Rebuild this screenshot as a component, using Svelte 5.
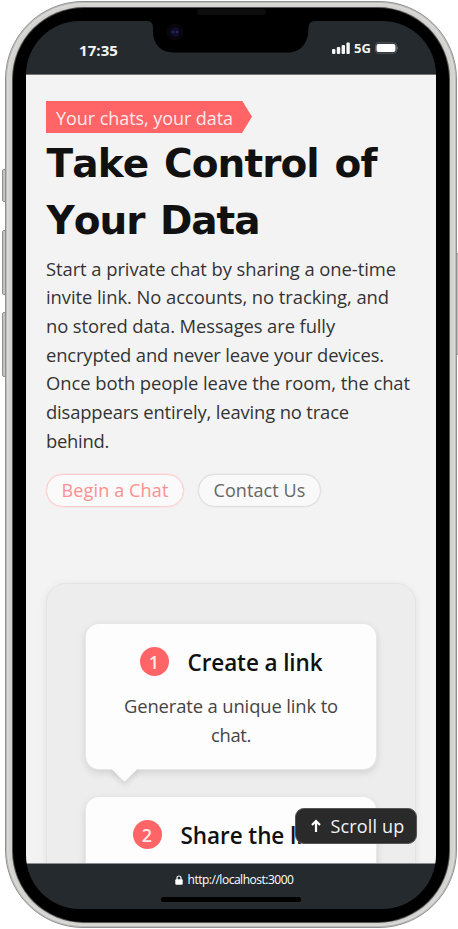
<script>
  const intro = [
    ['Start a private chat by sharing a one-time', 350],
    ['invite link. No accounts, no tracking, and', 343],
    ['no stored data. Messages are fully', 289],
    ['encrypted and never leave your devices.', 338],
    ['Once both people leave the room, the chat', 364],
    ['disappears entirely, leaving no trace', 303],
    ['behind.', 63]
  ];
  const steps = [
    { title: 'Create a link', width: 135, lines: [['Generate a unique link to', 214], ['chat.', 40]] },
    { title: 'Share the link', width: 149, lines: [] }
  ];

  // Tracks a line of text out to a given measure.
  function fit(node, width) {
    node.style.letterSpacing = '0px';
    const natural = node.getBoundingClientRect().width;
    node.style.letterSpacing = (width - natural) / node.textContent.length + 'px';
  }
</script>

<div class="stage">
  <i class="key k1"></i><i class="key k2"></i><i class="key k3"></i><i class="key k4"></i>
  <div class="phone">
    <div class="bezel">
      <div class="speaker"></div>
      <div class="screen">
        <header>
          <b class="time"><span use:fit={39}>17:35</span></b>
          <div class="status">
            <svg width="18" height="12" viewBox="0 0 18 12" fill="#f4f5f5">
              <rect x="0" y="7" width="3.4" height="5" rx="1" />
              <rect x="4.8" y="5" width="3.4" height="7" rx="1" />
              <rect x="9.6" y="3" width="3.4" height="9" rx="1" />
              <rect x="14.4" y="0.5" width="3.4" height="11.5" rx="1" />
            </svg>
            <b><span use:fit={17}>5G</span></b>
            <svg width="24" height="12" viewBox="0 0 24 12">
              <rect x="0.5" y="0.8" width="21" height="10.4" rx="3" fill="none" stroke="#565b5f" />
              <rect x="1.5" y="2" width="19" height="8" rx="2" fill="#fff" />
              <path d="M22.5 4q1.4 2 0 4z" fill="#9b9fa1" />
            </svg>
          </div>
        </header>
        <main>
          <div class="tag"><span use:fit={177}>Your chats, your data</span></div>
          <h1><span use:fit={330}>Take Control of</span><span use:fit={213}>Your Data</span></h1>
          <p class="intro">
            {#each intro as [text, width]}<span use:fit={width}>{text}</span>{/each}
          </p>
          <div class="actions">
            <button class="primary"><span use:fit={107}>Begin a Chat</span></button>
            <button><span use:fit={92}>Contact Us</span></button>
          </div>
          <section>
            {#each steps as step, i}
              <article>
                <div class="head">
                  <div class="num">{i + 1}</div>
                  <h2><span use:fit={step.width}>{step.title}</span></h2>
                </div>
                <p>{#each step.lines as [text, width]}<span use:fit={width}>{text}</span>{/each}</p>
              </article>
            {/each}
          </section>
        </main>
        <footer>
          <div class="url">
            <svg width="8" height="10" viewBox="0 0 8 10">
              <path d="M2 5V3a2 2 0 0 1 4 0v2" fill="none" stroke="#fff" stroke-width="1.2" />
              <rect x="0.3" y="4.2" width="7.4" height="5.6" rx="1" fill="#fff" />
            </svg>
            <span use:fit={106}>http://localhost:3000</span>
          </div>
          <div class="home"></div>
        </footer>
        <button class="scroll">
          <svg width="12" height="14" viewBox="0 0 12 14" fill="none" stroke="#fff" stroke-width="2.2">
            <path d="M6 13V1.8M2 6L6 2L10 6" />
          </svg>
          <span use:fit={74}>Scroll up</span>
        </button>
      </div>
      <svg class="notch" width="170" height="36" viewBox="0 0 170 36">
        <path d="M0 0H170V3H169Q163 3 162.500 9V10C162.500 26 154 34.500 142 34.500H27C15 34.500 7 26 7 14V9Q6.500 3 1 3H0Z" />
        <circle cx="29" cy="14" r="8.500" fill="#08060c" />
        <circle cx="29" cy="14" r="4.500" fill="#0e0e2a" />
        <circle cx="27" cy="14" r="1.300" fill="#24246a" />
        <circle cx="31" cy="14" r="1.300" fill="#24246a" />
      </svg>
    </div>
  </div>
</div>

<style>
  :global(body) { background: #fff; }
  * { box-sizing: border-box; }
  .stage {
    position: relative; width: 458px; height: 929px; overflow: hidden;
    padding: 1px 0 0 5px; background: #fff;
    font-family: 'Open Sans', 'Noto Sans', sans-serif; color: #333;
  }
  span { display: inline-block; white-space: nowrap; }
  h1, h2, p { margin: 0; }
  .phone {
    position: relative; width: 452px; height: 927px; padding: 6px 7px 5px; border-radius: 78px;
    background: #d3d2cf; border: 1px solid #8f9192;
    box-shadow: inset 0 0 0 1px #b9bab9, inset 0 0 2px 2px #e0dfdc;
  }
  .bezel {
    position: relative; height: 914px; padding: 13px;
    border-radius: 71px; background: #000; box-shadow: 0 0 0 1px #555;
  }
  .speaker {
    position: absolute; top: 1px; left: 184px; width: 69px; height: 6px;
    border-radius: 3px; background: #0d0d0d;
  }
  .screen {
    position: relative; height: 888px; border-radius: 54px; overflow: hidden;
    display: flex; flex-direction: column; background: #252a2e;
  }
  .notch { position: absolute; left: 133px; top: 10px; }
  .key {
    position: absolute; left: 2px; width: 5px; border: 1px solid #909292;
    background: #c3c3c2; border-radius: 2px;
  }
  .k1 { top: 169px; height: 33px; }
  .k2 { top: 230px; height: 65px; }
  .k3 { top: 312px; height: 65px; }
  .k4 { left: 456px; top: 253px; height: 102px; }
  header {
    flex: 0 0 54px; display: flex; justify-content: space-between; align-items: flex-start;
    padding: 18px 37px 0 53px; color: #f4f5f5; border-bottom: 1px solid #6f7376;
  }
  .time { font-size: 15px; line-height: 22px; }
  .status { display: flex; align-items: center; gap: 4px; font-size: 13px; line-height: 18px; }
  .status svg { display: block; }
  main { flex: 0 0 788px; overflow: hidden; padding: 25.5px 20px 0; background: #f3f3f3; }
  .tag {
    width: 206px; height: 32.5px; padding-left: 10px; font-size: 18px; line-height: 34px;
    color: #ffe9e9; background: #ff6467;
    clip-path: polygon(0 0, 196px 0, 100% 50%, 196px 100%, 0 100%);
  }
  h1 {
    height: 117px; font: bold 39px/57px 'DejaVu Sans', sans-serif; color: #111;
    padding: 2px 0 0 0.5px; font-kerning: none; word-spacing: 3px;
  }
  h1 span { display: block; width: max-content; }
  .intro { margin-top: 4.6px; font-size: 18.4px; line-height: 28.7px; }
  .intro span, article p span { display: block; width: max-content; }
  .actions { display: flex; gap: 14px; margin-top: 18px; }
  button { font-family: inherit; }
  .actions button {
    height: 33px; border: 1.5px solid #dfdfdf; border-radius: 17px;
    background: #f9f9f9; color: #666; font-size: 18px; line-height: 31px;
    padding: 0 14.5px; box-shadow: 0 0 0 0.5px #e6e6e6;
  }
  .actions .primary {
    border-color: #ffcfcf; color: #ff8f91; background: #fafafa;
    box-shadow: 0 0 0 0.5px #ffdcdc;
  }
  section {
    margin-top: 76.4px; width: 370px; height: 500px; padding: 40px 39px 0;
    border: 1px solid #e3e3e3; border-radius: 20px; background: #ededed;
    box-shadow: 0 2px 8px rgba(0, 0, 0, 0.07);
  }
  article {
    position: relative; height: 145px; margin-bottom: 28px; padding: 20px 19px 0;
    border-radius: 13px; background: #fdfdfd;
    box-shadow: 0 0 0 1px #e7e7e7, 0 3px 8px rgba(0, 0, 0, 0.14);
  }
  article::after {
    content: ''; position: absolute; left: 29px; bottom: -9px; width: 19px; height: 19px;
    transform: rotate(45deg); background: #fdfdfd; border-radius: 2px;
    box-shadow: 3px 3px 5px rgba(0, 0, 0, 0.09);
    clip-path: polygon(100% 0, 140% 0, 140% 140%, 0 140%, 0 100%);
  }
  .head { display: flex; justify-content: center; align-items: center; gap: 19px; height: 35px; }
  .num {
    width: 29px; height: 29px; border-radius: 50%; background: #ff6467; color: #ffe9e9;
    font-size: 18px; font-weight: 600; line-height: 30px; text-align: center;
  }
  h2 { font-size: 22.5px; line-height: 35px; font-weight: 600; color: #111; padding-top: 3px; }
  article p {
    display: flex; flex-direction: column; align-items: center; margin-top: 13px;
    font-size: 18.4px; line-height: 28.7px; color: #444;
  }
  footer { flex: 1; display: flex; flex-direction: column; align-items: center; border-top: 1px solid #8b8e90; }
  .url {
    display: flex; align-items: center; gap: 5px; margin: 7px 0 0 6px;
    color: #fff; font-size: 12px; line-height: 18px;
  }
  .home { width: 140px; height: 5px; border-radius: 3px; margin-top: 8px; background: #000; }
  .scroll {
    position: absolute; left: 269px; top: 787px; width: 122px; height: 36px;
    display: flex; align-items: center; justify-content: center; gap: 9px;
    border: 1px solid #555; border-radius: 9px; background: #2a2a2a; color: #f4f4f4;
    padding: 0 0 0 2px; font-size: 18px; line-height: 34px;
  }
</style>
